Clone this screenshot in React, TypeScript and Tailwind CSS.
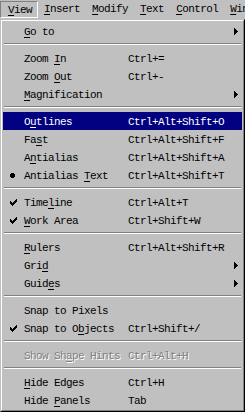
type Item =
  | { sep: true }
  | {
      sep?: false;
      label: string;
      shortcut?: string;
      sub?: boolean;
      mark?: 'check' | 'dot';
      active?: boolean;
      disabled?: boolean;
    };

// "&" marks the mnemonic letter
const items: Item[] = [
  { label: '&Go to', sub: true },
  { sep: true },
  { label: 'Zoom &In', shortcut: 'Ctrl+=' },
  { label: 'Zoom &Out', shortcut: 'Ctrl+-' },
  { label: '&Magnification', sub: true },
  { sep: true },
  { label: 'O&utlines', shortcut: 'Ctrl+Alt+Shift+O', active: true },
  { label: 'Fa&st', shortcut: 'Ctrl+Alt+Shift+F' },
  { label: 'A&ntialias', shortcut: 'Ctrl+Alt+Shift+A' },
  { label: 'Antialias &Text', shortcut: 'Ctrl+Alt+Shift+T', mark: 'dot' },
  { sep: true },
  { label: 'Time&line', shortcut: 'Ctrl+Alt+T', mark: 'check' },
  { label: '&Work Area', shortcut: 'Ctrl+Shift+W', mark: 'check' },
  { sep: true },
  { label: '&Rulers', shortcut: 'Ctrl+Alt+Shift+R' },
  { label: 'Gri&d', sub: true },
  { label: 'Guid&es', sub: true },
  { sep: true },
  { label: 'Snap to Pixels' },
  { label: 'Snap to O&bjects', shortcut: 'Ctrl+Shift+/', mark: 'check' },
  { sep: true },
  { label: 'Show Sh&ape Hints', shortcut: 'Ctrl+Alt+H', disabled: true },
  { sep: true },
  { label: '&Hide Edges', shortcut: 'Ctrl+H' },
  { label: 'Hide &Panels', shortcut: 'Tab' },
];

const menus = ['&View', '&Insert', '&Modify', '&Text', '&Control', '&Window'];

function Mnemonic({ text }: { text: string }) {
  const i = text.indexOf('&');
  if (i < 0) return <>{text}</>;
  return (
    <>
      {text.slice(0, i)}
      <span className="underline underline-offset-[2px]">{text[i + 1]}</span>
      {text.slice(i + 2)}
    </>
  );
}

function Check() {
  return (
    <svg width="7" height="7" viewBox="0 0 7 7" shapeRendering="crispEdges" fill="currentColor">
      <path d="M6 0h1v1H6zM5 1h2v1H5zM0 2h1v1H0zM4 2h3v1H4zM0 3h2v1H0zM3 3h3v1H3zM0 4h5v1H0zM1 5h3v1H1zM2 6h1v1H2z" />
    </svg>
  );
}

function Dot() {
  return (
    <svg width="5" height="5" viewBox="0 0 5 5" shapeRendering="crispEdges" fill="currentColor">
      <path d="M1 0h3v1H1zM0 1h5v3H0zM1 4h3v1H1z" />
    </svg>
  );
}

function Arrow() {
  return (
    <svg width="4" height="7" viewBox="0 0 4 7" shapeRendering="crispEdges" fill="currentColor">
      <path d="M0 0h1v7H0zM1 1h1v5H1zM2 2h1v3H2zM3 3h1v1H3z" />
    </svg>
  );
}

export default function App() {
  return (
    <div className="w-[245px] h-[412px] overflow-hidden bg-[#c0c0c0] text-black font-['Liberation_Mono',monospace] text-[11px] tracking-[-0.6px] leading-none select-none">
      {/* Menu bar */}
      <div className="flex h-[19px] items-start pt-[1px] whitespace-nowrap">
        {menus.map((m, i) => (
          <div
            key={m}
            className={
              i === 0
                ? 'flex h-[17px] items-center pl-[7px] pr-[5px] pt-[1px] border border-t-[#808080] border-l-[#808080] border-r-white border-b-white'
                : 'flex h-[17px] items-center px-[6px]'
            }
          >
            <Mnemonic text={m} />
          </div>
        ))}
      </div>

      {/* Dropdown */}
      <div className="border-t border-l border-t-[#c0c0c0] border-l-[#c0c0c0] border-r border-b border-r-black border-b-black">
        <div className="border-t border-l border-t-white border-l-white border-r border-b border-r-[#808080] border-b-[#808080] p-[1px]">
          {items.map((it, i) =>
            it.sep ? (
              <div key={i} className="h-[9px] pt-[3px] px-[1px]">
                <div className="h-[1px] bg-[#808080]" />
                <div className="h-[1px] bg-white" />
              </div>
            ) : (
              <div
                key={i}
                className={`flex h-[18px] items-center whitespace-nowrap pt-[2px] ${
                  it.active ? 'bg-[#000080] text-white' : ''
                } ${it.disabled ? 'text-[#808080] [text-shadow:1px_1px_0_#fff]' : ''}`}
              >
                <span className="w-[21px] flex items-center pl-[7px] -mt-[1px]">
                  {it.mark === 'check' && <Check />}
                  {it.mark === 'dot' && <Dot />}
                </span>
                <span className="w-[104px]">
                  <Mnemonic text={it.label} />
                </span>
                <span className="flex-1">{it.shortcut}</span>
                <span className="w-[8px] flex items-center -mt-[1px]">{it.sub && <Arrow />}</span>
              </div>
            )
          )}
        </div>
      </div>
    </div>
  );
}
